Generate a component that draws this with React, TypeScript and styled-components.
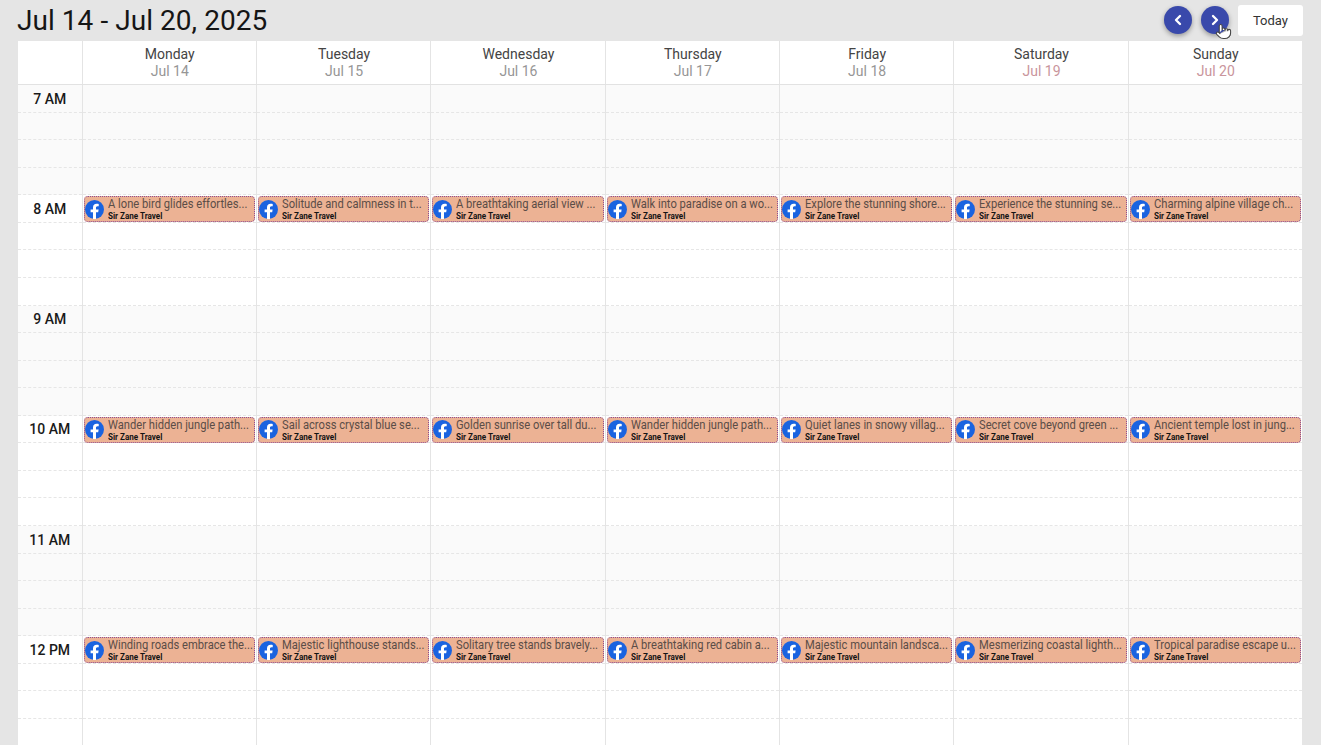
import { ChevronLeft, ChevronRight, Pointer } from 'lucide-react';
import styled, { createGlobalStyle } from 'styled-components';

const GlobalStyle = createGlobalStyle`
  html, body {
    margin: 0;
    height: 100%;
    overflow: hidden;
    background: #e5e5e5;
    font-family: Roboto, "Liberation Sans", sans-serif;
  }
`;

const columns = '63.6px repeat(7, 1fr)';
const slotHeight = '27.57px';

const Page = styled.div`
  box-sizing: border-box;
  height: 745px;
  padding: 0 19px 0 18px;
  overflow: hidden;
`;

const Toolbar = styled.header`
  display: flex;
  align-items: center;
  height: 41px;
`;

const Title = styled.h1`
  flex: 1;
  margin: 0 0 0 -1px;
  font-size: 28px;
  font-weight: 400;
  letter-spacing: 0.05px;
  color: #151515;
`;

const NavButton = styled.button`
  position: relative;
  display: flex;
  align-items: center;
  justify-content: center;
  width: 28px;
  height: 28px;
  margin-right: 9px;
  margin-top: -2px;
  padding: 0;
  border: none;
  border-radius: 50%;
  background: #3949ab;
  color: #fff;
  box-shadow: 0 2px 5px rgba(0, 0, 0, 0.35);
`;

const CursorHand = styled.span`
  position: absolute;
  left: 14px;
  top: 17px;
  z-index: 1;
  display: flex;
  color: #444;
`;

const TodayButton = styled.button`
  width: 65px;
  height: 31px;
  margin-right: -1px;
  border: none;
  border-radius: 3px;
  background: #fff;
  color: #333;
  font-family: inherit;
  font-size: 13px;
`;

const Calendar = styled.div`
  background: #fff;
`;

const HeaderRow = styled.div`
  display: grid;
  grid-template-columns: ${columns};
  height: 44px;
  box-sizing: border-box;
  border-bottom: 1px solid #e2e2e2;
`;

const DayHead = styled.div`
  display: flex;
  flex-direction: column;
  align-items: center;
  padding: 5px 0 0 1px;
  border-left: 1px solid #e4e4e4;
  font-size: 14px;
  line-height: 16.5px;
  color: #444;
`;

const DayDate = styled.span<{ $weekend: boolean }>`
  color: ${(p) => (p.$weekend ? '#c9959c' : '#969696')};
`;

const HourRow = styled.div<{ $shaded: boolean }>`
  display: grid;
  grid-template-columns: ${columns};
  background: ${(p) => (p.$shaded ? '#fafafa' : '#fff')};
`;

const HourCell = styled.div<{ $first?: boolean }>`
  min-width: 0;
  border-left: ${(p) => (p.$first ? 'none' : '1px solid #e4e4e4')};
`;

const Slot = styled.div`
  box-sizing: border-box;
  height: ${slotHeight};
  padding-top: 1px;
  border-bottom: 1px dashed #e6e6e6;
`;

const TimeLabel = styled.div`
  padding-top: 3.5px;
  text-align: center;
  font-size: 14px;
  line-height: 18px;
  font-weight: 500;
  color: #1a1a1a;
`;

const EventCard = styled.div`
  box-sizing: border-box;
  display: flex;
  align-items: center;
  gap: 4px;
  height: 26px;
  margin: 0 1px;
  border: 1px dotted #8d4f93;
  border-radius: 4px;
  background: #ecb294;
  overflow: hidden;
`;

const EventText = styled.div`
  min-width: 0;
  flex: 1;
  display: flex;
  flex-direction: column;
  white-space: nowrap;
`;

const EventTitle = styled.span`
  display: block;
  transform: scaleX(0.86);
  transform-origin: left center;
  font-size: 13px;
  line-height: 14px;
  color: #5b4d47;
`;

const EventAuthor = styled.span`
  display: block;
  transform: scaleX(0.85);
  transform-origin: left center;
  font-size: 9.5px;
  line-height: 10px;
  font-weight: 700;
  color: #141414;
`;

const days = [
  { name: 'Monday', date: 'Jul 14' },
  { name: 'Tuesday', date: 'Jul 15' },
  { name: 'Wednesday', date: 'Jul 16' },
  { name: 'Thursday', date: 'Jul 17' },
  { name: 'Friday', date: 'Jul 18' },
  { name: 'Saturday', date: 'Jul 19', weekend: true },
  { name: 'Sunday', date: 'Jul 20', weekend: true },
];

const hours: { label: string; events?: string[] }[] = [
  { label: '7 AM' },
  {
    label: '8 AM',
    events: [
      'A lone bird glides effortles...',
      'Solitude and calmness in t...',
      'A breathtaking aerial view ...',
      'Walk into paradise on a wo...',
      'Explore the stunning shore...',
      'Experience the stunning se...',
      'Charming alpine village ch...',
    ],
  },
  { label: '9 AM' },
  {
    label: '10 AM',
    events: [
      'Wander hidden jungle path...',
      'Sail across crystal blue se...',
      'Golden sunrise over tall du...',
      'Wander hidden jungle path...',
      'Quiet lanes in snowy villag...',
      'Secret cove beyond green ...',
      'Ancient temple lost in jung...',
    ],
  },
  { label: '11 AM' },
  {
    label: '12 PM',
    events: [
      'Winding roads embrace the...',
      'Majestic lighthouse stands...',
      'Solitary tree stands bravely...',
      'A breathtaking red cabin a...',
      'Majestic mountain landsca...',
      'Mesmerizing coastal lighth...',
      'Tropical paradise escape u...',
    ],
  },
];

function FacebookIcon() {
  return (
    <svg width="19" height="19" viewBox="0 0 24 24" style={{ flexShrink: 0 }}>
      <circle cx="12" cy="12" r="12" fill="#1a63e0" />
      <path
        fill="#fff"
        d="M16.671 15.469 17.203 12h-3.328V9.75c0-.949.465-1.875 1.956-1.875h1.513V4.922s-1.374-.234-2.686-.234c-2.741 0-4.533 1.661-4.533 4.668V12H7.078v3.469h3.047v8.531a12.09 12.09 0 0 0 3.75 0v-8.531z"
      />
    </svg>
  );
}

function PostEvent({ title }: { title: string }) {
  return (
    <EventCard>
      <FacebookIcon />
      <EventText>
        <EventTitle>{title}</EventTitle>
        <EventAuthor>Sir Zane Travel</EventAuthor>
      </EventText>
    </EventCard>
  );
}

export default function App() {
  return (
    <Page>
      <GlobalStyle />
      <Toolbar>
        <Title>Jul 14 - Jul 20, 2025</Title>
        <NavButton>
          <ChevronLeft size={16} strokeWidth={3.5} />
        </NavButton>
        <NavButton>
          <ChevronRight size={16} strokeWidth={3.5} />
          <CursorHand>
            <Pointer size={17} fill="#fff" strokeWidth={1.5} />
          </CursorHand>
        </NavButton>
        <TodayButton>Today</TodayButton>
      </Toolbar>
      <Calendar>
        <HeaderRow>
          <div />
          {days.map((day) => (
            <DayHead key={day.name}>
              {day.name}
              <DayDate $weekend={!!day.weekend}>{day.date}</DayDate>
            </DayHead>
          ))}
        </HeaderRow>
        {hours.map((hour, i) => (
          <HourRow key={hour.label} $shaded={i % 2 === 0}>
            <HourCell $first>
              <Slot>
                <TimeLabel>{hour.label}</TimeLabel>
              </Slot>
              <Slot />
              <Slot />
              <Slot />
            </HourCell>
            {days.map((day, d) => (
              <HourCell key={day.name}>
                <Slot>{hour.events && <PostEvent title={hour.events[d]} />}</Slot>
                <Slot />
                <Slot />
                <Slot />
              </HourCell>
            ))}
          </HourRow>
        ))}
      </Calendar>
    </Page>
  );
}
